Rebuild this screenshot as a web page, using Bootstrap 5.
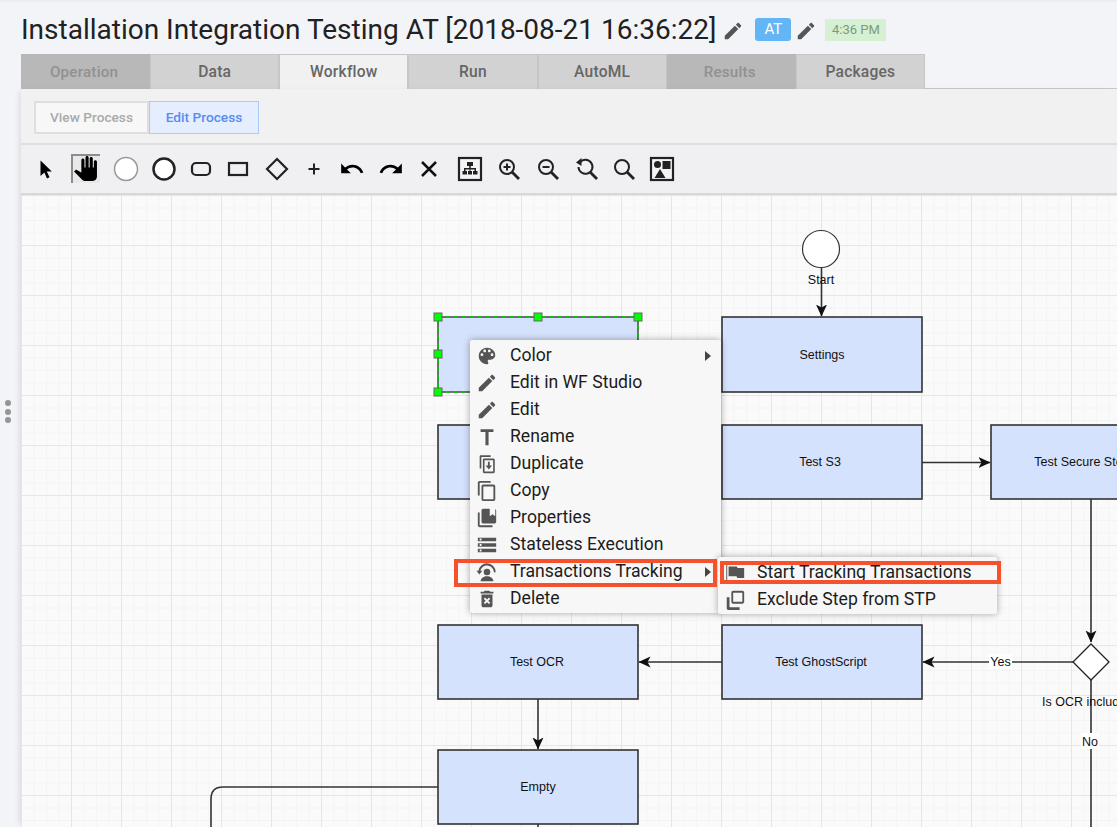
<!DOCTYPE html>
<html lang="en">
<head>
    <meta charset="UTF-8">
    <meta name="viewport" content="width=device-width, initial-scale=1.0">
    <title>Installation Integration Testing AT</title>
    <link rel="stylesheet" href="https://cdn.jsdelivr.net/npm/bootstrap@5.3.0/dist/css/bootstrap.min.css">
    <style>
        html, body { height: 100%; overflow: hidden; }
        body { background: #f2f4f8; font-family: Roboto, sans-serif; border-top: 2px solid #ebedf0; }
        .page-wrap { padding-left: 21px; height: 825px; }
        .title-bar { height: 52px; padding-top: 4px; flex: none; }
        .title-text { font-family: Roboto, sans-serif; font-size: 28px; font-weight: 400; color: #212121; margin: 0; line-height: 36px; }
        .title-edit { width: 22px; height: 22px; fill: #555; margin-left: 6px; margin-top: 2px; }
        .title-edit.edit-tag { margin-left: 4px; }
        .tag-at { width: 36px; height: 23px; margin-left: 11px; margin-top: -2px; background: #64b5f6; color: #fff; font-size: 15px; border-radius: 3px; }
        .tag-time { width: 61px; height: 22px; margin-left: 8px; margin-top: -1px; background: #d5f0d3; color: #7f9b78; font-size: 13px; }
        .tab-row { height: 35px; border-bottom: 1px solid #c8c8c8; flex: none; }
        .tab-item { width: 129.15px; height: 35px; padding-top: 2px; background: #d2d2d2; border: 1px solid #c6c6c6; border-bottom: 0; color: #666; font-size: 15.6px; font-weight: 500; letter-spacing: .2px; }
        .tab-item.tab-off { background: #b8b8b8; color: #919191; border-color: #b8b8b8; font-size: 15.2px; padding-top: 0; padding-right: 3px; }
        .tab-item.tab-on { background: #f1f1f1; }
        .mode-bar { height: 56px; background: #f1f1f1; border-bottom: 2px solid #dedede; padding: 12px 13px; }
        .mode-btn { height: 33px; font-size: 13.7px; font-weight: 500; padding: 0; border-radius: 0; }
        .mode-view { width: 115px; background: #f7f7f7; color: #aaa; border: 2px solid #dfdfdf; }
        .mode-edit { width: 110px; background: #e4eefe; color: #5a8bf0; border: 1px solid #a9cbf8; }
        .tool-bar { height: 50px; background: #f0f0f2; border-bottom: 2px solid #d8d8d8; padding-left: 10px; }
        .tool-cell { width: 30px; height: 30px; flex: none; margin-left: 8px; }
        .tool-cell:first-child { margin-left: 0; }
        .tool-cell:nth-child(2), .tool-cell:nth-child(7), .tool-cell:nth-child(10), .tool-cell:nth-child(13), .tool-cell:nth-child(14), .tool-cell:nth-child(15) { margin-left: 9px; }
        .tool-cell:nth-child(3), .tool-cell:nth-child(12) { margin-left: 11px; }
        .tool-cell:nth-child(5), .tool-cell:nth-child(6), .tool-cell:nth-child(8), .tool-cell:nth-child(16) { margin-left: 7px; }
        .tool-cell svg { width: 30px; height: 30px; display: block; }
        .tool-cell svg.glyph-wide { width: 26px; height: 26px; margin-top: 2px; }
        .tool-hand { width: 29px; height: 29px; background: #e8e8e8; box-shadow: inset 2px 2px 0 #8d8d8d; }
        .tool-cell .tool-hand svg { width: 25px; height: 25px; }
        .flow-canvas { height: 632px; overflow: hidden; background-color: #fafafa;
            background-image:
                linear-gradient(#e6e6e6 1px, transparent 1px),
                linear-gradient(90deg, #e6e6e6 1px, transparent 1px),
                linear-gradient(#f4f4f4 1px, transparent 1px),
                linear-gradient(90deg, #f4f4f4 1px, transparent 1px);
            background-size: 50px 50px, 50px 50px, 12.5px 12.5px, 12.5px 12.5px; }
        .flow-canvas > svg { display: block; }
        .flow-node { fill: #d5e2fd; stroke: #333; stroke-width: 1.6; }
        .flow-edge { fill: none; stroke: #333; stroke-width: 1.6; }
        .flow-label { font-family: "Liberation Sans", Arial, sans-serif; font-size: 12.5px; fill: #111; text-anchor: middle; }
        .grip-dots { position: absolute; left: 5px; top: 400px; }
        .grip-dots i { display: block; width: 6px; height: 6px; margin-bottom: 2.7px; border-radius: 50%; background: #959595; }
        .side-shade { box-shadow: -4px 0 6px -3px rgba(0, 0, 0, .12); }
        .ctx-menu.dropdown-menu { padding: 2px 0 1px; margin: 0; min-width: 0; background: #f7f7f7; border: 0; border-radius: 2px;
            box-shadow: 0 0 7px rgba(0, 0, 0, .35); font-family: Roboto, sans-serif; }
        .ctx-main { left: 449px; top: 145px; width: 251px; }
        .ctx-sub { left: 697px; top: 362px; width: 279px; padding-bottom: 3px; }
        .ctx-menu .dropdown-item { height: 27px; padding: 0 0 0 6px; font-size: 17.6px; color: #1c1c1c; line-height: 27px; }
        .ctx-menu svg { width: 22px; height: 22px; fill: #555; flex: none; margin-right: 12px; }
        .ctx-sub .dropdown-item svg { margin-right: 11px; }
        .ctx-caret { width: 0; height: 0; margin-left: auto; margin-right: 10px; border-left: 6px solid #444; border-top: 5px solid transparent; border-bottom: 5px solid transparent; }
        .note-box { position: absolute; z-index: 1001; border: 4px solid #f4512c; pointer-events: none; }
        .note-one { left: 433px; top: 364px; width: 263px; height: 28px; }
        .note-two { left: 699px; top: 366px; width: 281px; height: 23px; }
    </style>
</head>
<body>
    <svg width="0" height="0" class="position-absolute">
        <symbol id="i-edit" viewBox="0 0 24 24"><path d="M3 17.25V21h3.75L17.81 9.94l-3.75-3.75L3 17.25zM20.71 7.04c.39-.39.39-1.02 0-1.41l-2.34-2.34c-.39-.39-1.02-.39-1.41 0l-1.83 1.83 3.75 3.75 1.83-1.83z"/></symbol>
        <symbol id="i-palette" viewBox="0 0 24 24"><path d="M12 3c-4.97 0-9 4.03-9 9s4.03 9 9 9c.83 0 1.5-.67 1.5-1.5 0-.39-.15-.74-.39-1.01-.23-.26-.38-.61-.38-.99 0-.83.67-1.5 1.5-1.5H16c2.76 0 5-2.24 5-5 0-4.42-4.03-8-9-8zm-5.5 9c-.83 0-1.5-.67-1.5-1.5S5.67 9 6.5 9 8 9.67 8 10.5 7.33 12 6.5 12zm3-4C8.67 8 8 7.33 8 6.5S8.67 5 9.5 5s1.5.67 1.5 1.5S10.33 8 9.5 8zm5 0c-.83 0-1.5-.67-1.5-1.5S13.67 5 14.5 5s1.5.67 1.5 1.5S15.33 8 14.5 8zm3 4c-.83 0-1.5-.67-1.5-1.5S16.67 9 17.5 9s1.5.67 1.5 1.5-.67 1.5-1.5 1.5z"/></symbol>
        <symbol id="i-rename" viewBox="0 0 24 24"><path d="M5 3.500v3h5.300V21h3.400V6.500H19v-3z"/></symbol>
        <symbol id="i-dup" viewBox="0 0 24 24"><path d="M5 2.500h11v1.800H5.800V17H4V3.500c0-.6.400-1 1-1zm4 3.500h10c.9 0 1.500.6 1.500 1.500v13c0 .9-.6 1.500-1.500 1.500H9c-.9 0-1.500-.6-1.500-1.500v-13C7.500 6.600 8.100 6 9 6zm.3 1.800v12.400h9.400V7.800H9.300zm3.700 1.700h2v4h2.500L14 18l-3.500-4.500H13z"/></symbol>
        <symbol id="i-copy" viewBox="0 0 24 24"><path d="M16 1H4c-1.100 0-2 .9-2 2v14h2V3h12V1zm3 4H8c-1.100 0-2 .9-2 2v14c0 1.100.9 2 2 2h11c1.100 0 2-.9 2-2V7c0-1.100-.9-2-2-2zm0 16H8V7h11v14z"/></symbol>
        <symbol id="i-props" viewBox="0 0 24 24"><path d="M4 6H2v14c0 1.100.9 2 2 2h14v-2H4V6zm4-4h7v8l3-2 3 2V2.200c.6.300 1 1 1 1.800v12c0 1.100-.9 2-2 2H8c-1.100 0-2-.9-2-2V4c0-1.100.9-2 2-2z"/></symbol>
        <symbol id="i-stack" viewBox="0 0 24 24"><path d="M2 20h20v-4H2v4zm2-3h2v2H4v-2zM2 4v4h20V4H2zm4 3H4V5h2v2zm-4 7h20v-4H2v4zm2-3h2v2H4v-2z"/></symbol>
        <symbol id="i-track" viewBox="0 0 24 24"><path d="M12 2.500a9.500 9.500 0 0 0-9.400 8.200H.5l3.200 4 3.200-4H4.700a7.500 7.500 0 0 1 14.800 1.500h2A9.500 9.500 0 0 0 12 2.500z"/><circle cx="12" cy="12" r="3.600"/><path d="M5 22c.4-3.700 3.500-5.500 7-5.500s6.600 1.800 7 5.500z"/></symbol>
        <symbol id="i-del" viewBox="0 0 24 24"><path d="M6 19c0 1.100.9 2 2 2h8c1.100 0 2-.9 2-2V7H6v12zm2.460-7.120l1.410-1.410L12 12.590l2.120-2.120 1.410 1.410L13.410 14l2.120 2.120-1.410 1.410L12 15.410l-2.120 2.120-1.410-1.410L10.590 14l-2.130-2.120zM15.500 4l-1-1h-5l-1 1H5v2h14V4z"/></symbol>
        <symbol id="i-flag" viewBox="0 0 24 24"><path d="M2.500 2h1v20h-1z"/><path d="M5 5h9l.8 1.500H22v11h-7.500l-.8-2H5z"/></symbol>
        <symbol id="i-stp" viewBox="0 0 24 24"><path d="M3 9h3v10c0 .6.400 1 1 1h10v3H5c-1.100 0-2-.9-2-2V9zm7-7h10c1.100 0 2 .9 2 2v10c0 1.100-.9 2-2 2H10c-1.100 0-2-.9-2-2V4c0-1.100.9-2 2-2zm0 2v10h10V4H10z"/></symbol>
    </svg>

    <div class="grip-dots"><i></i><i></i><i></i></div>

    <div class="page-wrap d-flex flex-column">
        <header class="title-bar d-flex align-items-center">
            <h1 class="title-text">Installation Integration Testing AT [2018-08-21 16:36:22]</h1>
            <svg class="title-edit"><use href="#i-edit"/></svg>
            <span class="tag-at d-flex align-items-center justify-content-center">AT</span>
            <svg class="title-edit edit-tag"><use href="#i-edit"/></svg>
            <span class="tag-time d-flex align-items-center justify-content-center">4:36 PM</span>
        </header>

        <nav class="tab-row d-flex">
            <div class="tab-item tab-off d-flex align-items-center justify-content-center">Operation</div>
            <div class="tab-item d-flex align-items-center justify-content-center">Data</div>
            <div class="tab-item tab-on d-flex align-items-center justify-content-center">Workflow</div>
            <div class="tab-item d-flex align-items-center justify-content-center">Run</div>
            <div class="tab-item d-flex align-items-center justify-content-center">AutoML</div>
            <div class="tab-item tab-off d-flex align-items-center justify-content-center">Results</div>
            <div class="tab-item d-flex align-items-center justify-content-center">Packages</div>
        </nav>

        <div class="side-shade">
            <div class="mode-bar">
                <div class="btn-group">
                    <button type="button" class="btn mode-btn mode-view">View Process</button>
                    <button type="button" class="btn mode-btn mode-edit ms-0">Edit Process</button>
                </div>
            </div>

            <div class="tool-bar d-flex align-items-center">
                <span class="tool-cell d-flex justify-content-center"><svg viewBox="0 0 30 30"><path d="M9.500 6.500v15.500l3.800-3.500 2.700 6 2.500-1.200-2.700-5.800h5z"/></svg></span>
                <span class="tool-cell d-flex justify-content-center"><span class="tool-hand d-flex justify-content-center align-items-center"><svg viewBox="0 0 24 24"><path d="M23 5.500V20c0 2.200-1.800 4-4 4h-7.300c-1.080 0-2.100-.43-2.850-1.190L1 14.830s1.260-1.230 1.300-1.250c.22-.19.49-.29.79-.29.22 0 .42.060.6.160.040.010 4.310 2.460 4.310 2.460V4c0-.83.67-1.500 1.500-1.500S11 3.170 11 4v7h1V1.500c0-.83.67-1.500 1.500-1.500S15 .67 15 1.500V11h1V2.500c0-.83.67-1.500 1.500-1.500s1.500.67 1.500 1.500V11h1V5.500c0-.83.67-1.500 1.500-1.500s1.500.67 1.500 1.500z"/></svg></span></span>
                <span class="tool-cell d-flex justify-content-center"><svg viewBox="0 0 30 30"><circle cx="15" cy="15" r="11.500" fill="#fff" stroke="#999" stroke-width="1.500"/></svg></span>
                <span class="tool-cell d-flex justify-content-center"><svg viewBox="0 0 30 30"><circle cx="15" cy="15" r="10.500" fill="#fff" stroke="#222" stroke-width="2.500"/></svg></span>
                <span class="tool-cell d-flex justify-content-center"><svg viewBox="0 0 30 30"><rect x="6" y="9" width="18" height="12" rx="4" fill="none" stroke="#222" stroke-width="2.200"/></svg></span>
                <span class="tool-cell d-flex justify-content-center"><svg viewBox="0 0 30 30"><rect x="6" y="9" width="18" height="12" fill="none" stroke="#222" stroke-width="2.200"/></svg></span>
                <span class="tool-cell d-flex justify-content-center"><svg viewBox="0 0 30 30"><path d="M15 5l10 10-10 10L5 15z" fill="none" stroke="#222" stroke-width="2.200"/></svg></span>
                <span class="tool-cell d-flex justify-content-center"><svg viewBox="0 0 30 30"><path d="M14 9.500h2V14h4.500v2H16v4.500h-2V16H9.500v-2H14z" fill="#222"/></svg></span>
                <span class="tool-cell d-flex justify-content-center"><svg class="glyph-wide" viewBox="0 0 24 24"><path d="M12.500 8c-2.650 0-5.050.99-6.900 2.600L2 7v9h9l-3.620-3.620c1.390-1.160 3.160-1.880 5.120-1.880 3.540 0 6.550 2.310 7.600 5.500l2.370-.78C21.080 11.030 17.150 8 12.500 8z"/></svg></span>
                <span class="tool-cell d-flex justify-content-center"><svg class="glyph-wide" viewBox="0 0 24 24"><path d="M18.400 10.600C16.550 8.990 14.150 8 11.500 8c-4.650 0-8.580 3.030-9.960 7.220L3.900 16c1.050-3.190 4.050-5.500 7.600-5.500 1.950 0 3.730.72 5.120 1.880L13 16h9V7l-3.600 3.600z"/></svg></span>
                <span class="tool-cell d-flex justify-content-center"><svg viewBox="0 0 30 30"><path d="M8 8l14 14M22 8L8 22" stroke="#111" stroke-width="2.500" fill="none"/></svg></span>
                <span class="tool-cell d-flex justify-content-center"><svg viewBox="0 0 30 30"><rect x="4" y="4" width="22" height="22" fill="#f4f4f4" stroke="#222" stroke-width="2.200"/><path d="M12 8h6v4h-2.200v2H21v3h1.500v3.500h-4.500V17h1.500v-1.500h-4V17H17v3.500h-4V17h1.500v-1.500h-4V17H12v3.500H7.500V17H9v-3h5.200v-2H12z" fill="#222"/></svg></span>
                <span class="tool-cell d-flex justify-content-center"><svg viewBox="0 0 30 30"><circle cx="13" cy="13" r="7" fill="none" stroke="#222" stroke-width="2"/><path d="M18 18l7 7" stroke="#222" stroke-width="2.800"/><path d="M12 9.500h2V12h2.500v2H14v2.500h-2V14H9.500v-2H12z" fill="#222"/></svg></span>
                <span class="tool-cell d-flex justify-content-center"><svg viewBox="0 0 30 30"><circle cx="13" cy="13" r="7" fill="none" stroke="#222" stroke-width="2"/><path d="M18 18l7 7" stroke="#222" stroke-width="2.800"/><path d="M9.500 12h7v2h-7z" fill="#222"/></svg></span>
                <span class="tool-cell d-flex justify-content-center"><svg viewBox="0 0 30 30"><path d="M8 8.500a7 7 0 1 1-1.500 4.500" fill="none" stroke="#222" stroke-width="2"/><path d="M4 8.500l5.500-4.500v8z" fill="#222"/><path d="M18 18l7 7" stroke="#222" stroke-width="2.800"/></svg></span>
                <span class="tool-cell d-flex justify-content-center"><svg viewBox="0 0 30 30"><circle cx="13" cy="13" r="7" fill="none" stroke="#222" stroke-width="2"/><path d="M18 18l7 7" stroke="#222" stroke-width="2.800"/></svg></span>
                <span class="tool-cell d-flex justify-content-center"><svg viewBox="0 0 30 30"><rect x="4" y="4" width="22" height="22" fill="#f4f4f4" stroke="#222" stroke-width="2.200"/><circle cx="10.500" cy="10.500" r="3.500" fill="#222"/><rect x="15.500" y="7" width="8" height="8" fill="#222"/><path d="M13 15l5.500 9h-11z" fill="#222"/></svg></span>
            </div>

            <div class="flow-canvas position-relative">
                <svg width="1096" height="632" viewBox="21 195 1096 632">
                    <defs>
                        <marker id="arrow-head" markerUnits="userSpaceOnUse" markerWidth="13" markerHeight="12" refX="11.500" refY="6" orient="auto">
                            <path d="M0 .5L12 6L0 11.500L3 6z" fill="#111"/>
                        </marker>
                    </defs>

                    <path class="flow-edge" d="M821.500 267V316" marker-end="url(#arrow-head)"/>
                    <path class="flow-edge" d="M922 462.500H990" marker-end="url(#arrow-head)"/>
                    <path class="flow-edge" d="M1091 499V642" marker-end="url(#arrow-head)"/>
                    <path class="flow-edge" d="M1073 662H923" marker-end="url(#arrow-head)"/>
                    <path class="flow-edge" d="M722 662H639" marker-end="url(#arrow-head)"/>
                    <path class="flow-edge" d="M538 699V749" marker-end="url(#arrow-head)"/>
                    <path class="flow-edge" d="M1091 680V827"/>
                    <path class="flow-edge" d="M438 787H223Q211 787 211 799V827"/>
                    <path class="flow-edge" d="M538 824V827"/>

                    <circle cx="821" cy="249" r="18.500" fill="#fff" stroke="#333" stroke-width="1.200"/>
                    <rect class="flow-node" x="722" y="317" width="200" height="75"/>
                    <rect class="flow-node" x="438" y="425" width="200" height="74"/>
                    <rect class="flow-node" x="722" y="425" width="200" height="74"/>
                    <rect class="flow-node" x="991" y="425" width="200" height="74"/>
                    <rect class="flow-node" x="722" y="625" width="200" height="74"/>
                    <rect class="flow-node" x="438" y="625" width="200" height="74"/>
                    <rect class="flow-node" x="438" y="750" width="200" height="74"/>
                    <path d="M1091 644l18 18-18 18-18-18z" fill="#fff" stroke="#222" stroke-width="1.300"/>

                    <!-- selected step, handles on top -->
                    <rect x="438" y="317" width="200" height="75" fill="#d5e2fd" stroke="#444" stroke-width="1.500"/>
                    <rect x="438" y="317" width="200" height="75" fill="none" stroke="#0c0" stroke-width="1.500" stroke-dasharray="4 4"/>
                    <g fill="#0f0" stroke="#666" stroke-width="1">
                        <rect x="434" y="313" width="8" height="8"/>
                        <rect x="534" y="313" width="8" height="8"/>
                        <rect x="634" y="313" width="8" height="8"/>
                        <rect x="434" y="350" width="8" height="8"/>
                        <rect x="434" y="388" width="8" height="8"/>
                    </g>

                    <text class="flow-label" x="821" y="284">Start</text>
                    <text class="flow-label" x="822" y="359">Settings</text>
                    <text class="flow-label" x="820" y="466">Test S3</text>
                    <text class="flow-label" x="1091" y="466">Test Secure Storage</text>
                    <text class="flow-label" x="821" y="666">Test GhostScript</text>
                    <text class="flow-label" x="537" y="666">Test OCR</text>
                    <text class="flow-label" x="538" y="791">Empty</text>
                    <text class="flow-label" x="1091" y="706">Is OCR included?</text>
                    <rect x="989" y="654" width="23" height="15" fill="#fff"/>
                    <text class="flow-label" x="1000.500" y="666">Yes</text>
                    <rect x="1081" y="733" width="18" height="16" fill="#fff"/>
                    <text class="flow-label" x="1090" y="746">No</text>
                </svg>

                <ul class="dropdown-menu show ctx-menu ctx-main list-unstyled">
                    <li><a class="dropdown-item d-flex align-items-center" href="#"><svg><use href="#i-palette"/></svg>Color<span class="ctx-caret"></span></a></li>
                    <li><a class="dropdown-item d-flex align-items-center" href="#"><svg><use href="#i-edit"/></svg>Edit in WF Studio</a></li>
                    <li><a class="dropdown-item d-flex align-items-center" href="#"><svg><use href="#i-edit"/></svg>Edit</a></li>
                    <li><a class="dropdown-item d-flex align-items-center" href="#"><svg><use href="#i-rename"/></svg>Rename</a></li>
                    <li><a class="dropdown-item d-flex align-items-center" href="#"><svg><use href="#i-dup"/></svg>Duplicate</a></li>
                    <li><a class="dropdown-item d-flex align-items-center" href="#"><svg><use href="#i-copy"/></svg>Copy</a></li>
                    <li><a class="dropdown-item d-flex align-items-center" href="#"><svg><use href="#i-props"/></svg>Properties</a></li>
                    <li><a class="dropdown-item d-flex align-items-center" href="#"><svg><use href="#i-stack"/></svg>Stateless Execution</a></li>
                    <li><a class="dropdown-item d-flex align-items-center" href="#"><svg><use href="#i-track"/></svg>Transactions Tracking<span class="ctx-caret"></span></a></li>
                    <li><a class="dropdown-item d-flex align-items-center" href="#"><svg><use href="#i-del"/></svg>Delete</a></li>
                </ul>

                <ul class="dropdown-menu show ctx-menu ctx-sub list-unstyled">
                    <li><a class="dropdown-item d-flex align-items-center" href="#"><svg><use href="#i-flag"/></svg>Start Tracking Transactions</a></li>
                    <li><a class="dropdown-item d-flex align-items-center" href="#"><svg><use href="#i-stp"/></svg>Exclude Step from STP</a></li>
                </ul>

                <div class="note-box note-one"></div>
                <div class="note-box note-two"></div>
            </div>
        </div>
    </div>

    <script src="https://cdn.jsdelivr.net/npm/bootstrap@5.3.0/dist/js/bootstrap.bundle.min.js"></script>
</body>
</html>
